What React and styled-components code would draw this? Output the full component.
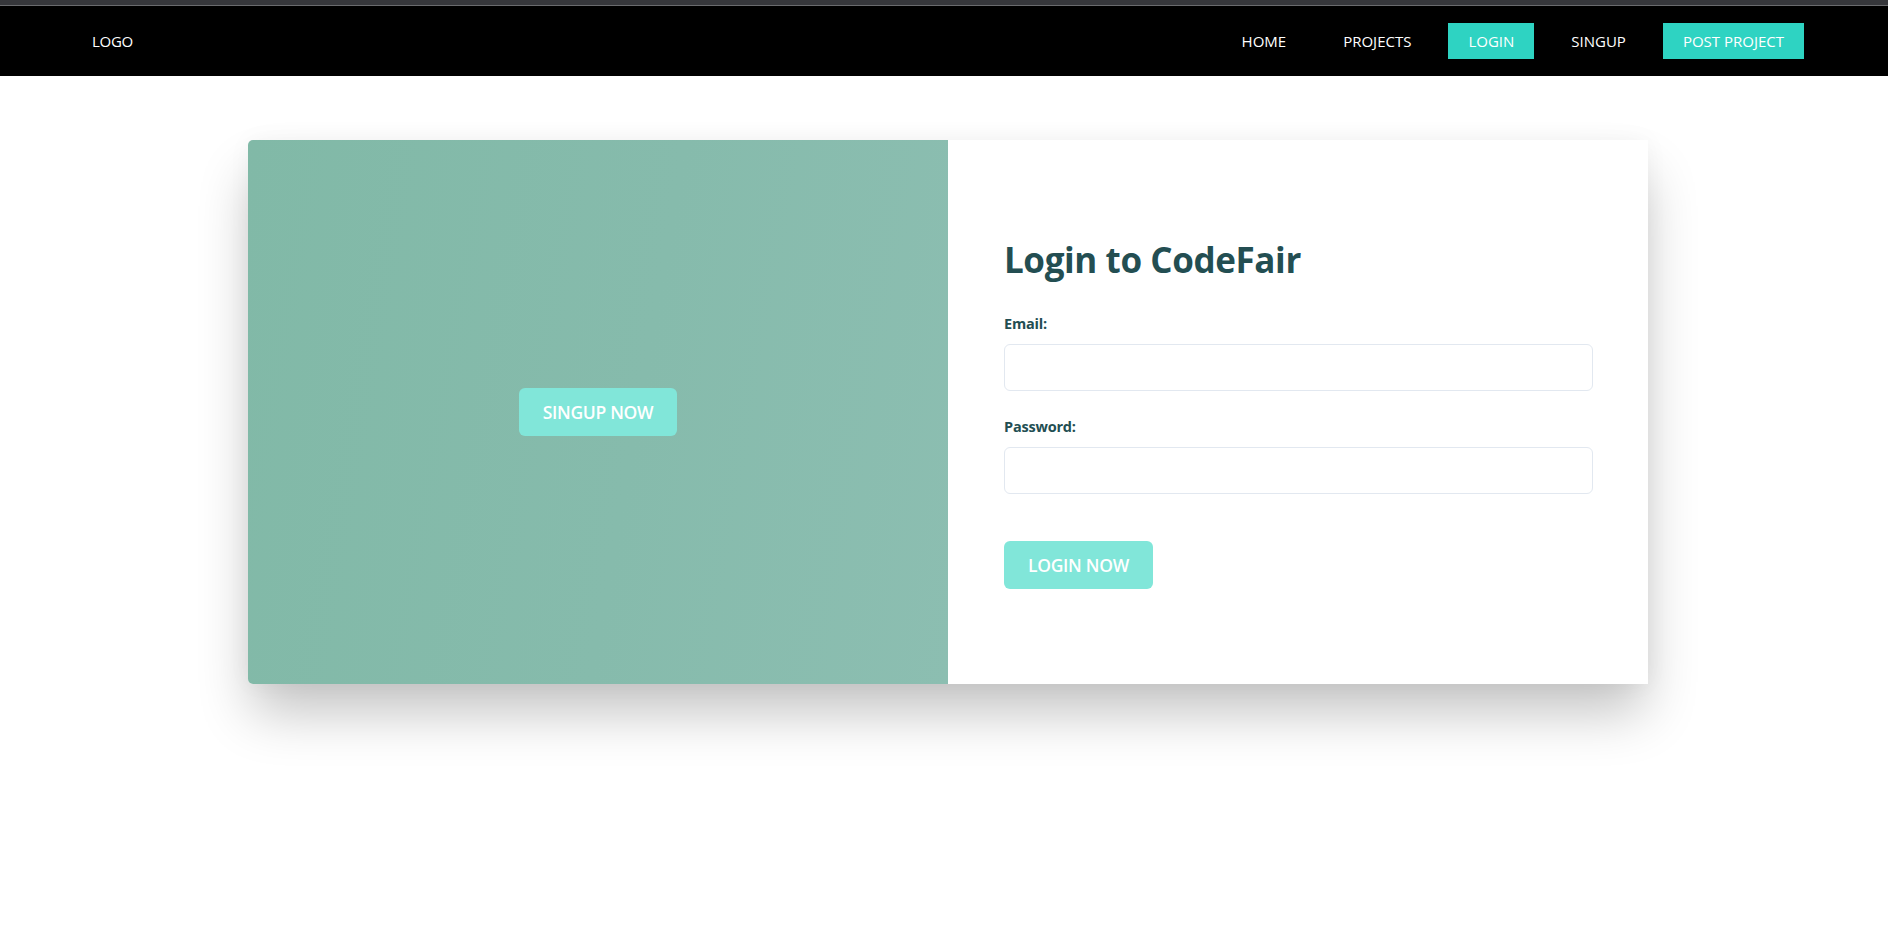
import styled, { createGlobalStyle } from "styled-components";

const GlobalStyle = createGlobalStyle`
  * {
    box-sizing: border-box;
  }
  body {
    margin: 0;
    background: #fff;
    font-family: "Open Sans", "Noto Sans", sans-serif;
  }
`;

const Page = styled.div`
  min-height: 100vh;
  background: #fff;
`;

const ChromeStrip = styled.div`
  height: 6px;
  background: #36373b;
  border-bottom: 1px solid #6a6b6e;
`;

const Nav = styled.nav`
  height: 70px;
  background: #000;
  display: flex;
  align-items: center;
  justify-content: space-between;
  padding: 0 84px 0 92px;
  font-size: 15px;
  color: #fff;
  text-transform: uppercase;
`;

const Logo = styled.div`
  letter-spacing: -0.3px;
`;

const Menu = styled.div`
  display: flex;
  align-items: center;
  gap: 17px;
`;

const MenuItem = styled.a`
  height: 36px;
  display: flex;
  align-items: center;
  padding: 0 20px;
  color: #fff;
  text-decoration: none;
  background: ${(p) => (p.$active ? "#2ed3c2" : "transparent")};
`;

const Main = styled.main`
  padding: 64px 0 120px 248px;
`;

const Card = styled.div`
  width: 1400px;
  height: 544px;
  display: grid;
  grid-template-columns: 700px 700px;
  box-shadow: 0 32px 54px -4px rgba(0, 0, 0, 0.24),
    0 0 24px rgba(0, 0, 0, 0.04);
  border-radius: 5px 0 0 5px;
`;

const Banner = styled.div`
  border-radius: 5px 0 0 5px;
  background: linear-gradient(100deg, #81b9a7 0%, #86bbac 55%, #8cbeb1 100%);
  display: flex;
  align-items: center;
  justify-content: center;
`;

const Button = styled.button`
  height: 48px;
  padding: 0 24px;
  border: none;
  border-radius: 6px;
  background: #81e6d9;
  color: #fff;
  font-family: inherit;
  font-size: 17.5px;
  font-weight: 600;
  text-transform: uppercase;
  letter-spacing: -0.3px;
  cursor: pointer;
`;

const FormPanel = styled.div`
  background: #fff;
  padding: 3px 55px 0 56px;
  display: flex;
  flex-direction: column;
  justify-content: center;
`;

const Title = styled.h1`
  margin: 0 0 33px;
  font-size: 35px;
  font-weight: 700;
  line-height: 1.2;
  color: #234e52;
  letter-spacing: -0.4px;
`;

const Field = styled.div`
  display: flex;
  flex-direction: column;
  margin-bottom: 26px;
`;

const Label = styled.label`
  font-size: 14.5px;
  font-weight: 700;
  color: #234e52;
  line-height: 20px;
  margin-bottom: 10px;
  letter-spacing: -0.2px;
`;

const Input = styled.input`
  height: 47px;
  border: 1px solid #e2e8f0;
  border-radius: 6px;
  padding: 0 16px;
  font-family: inherit;
  font-size: 16px;
  outline: none;
`;

const Submit = styled(Button)`
  align-self: flex-start;
  margin-top: 21px;
`;

export default function App() {
  return (
    <Page>
      <GlobalStyle />
      <ChromeStrip />
      <Nav>
        <Logo>Logo</Logo>
        <Menu>
          <MenuItem>Home</MenuItem>
          <MenuItem>Projects</MenuItem>
          <MenuItem $active>Login</MenuItem>
          <MenuItem>Singup</MenuItem>
          <MenuItem $active>Post Project</MenuItem>
        </Menu>
      </Nav>
      <Main>
        <Card>
          <Banner>
            <Button>Singup Now</Button>
          </Banner>
          <FormPanel>
            <Title>Login to CodeFair</Title>
            <Field>
              <Label>Email:</Label>
              <Input type="email" />
            </Field>
            <Field>
              <Label>Password:</Label>
              <Input type="password" />
            </Field>
            <Submit>Login Now</Submit>
          </FormPanel>
        </Card>
      </Main>
    </Page>
  );
}
